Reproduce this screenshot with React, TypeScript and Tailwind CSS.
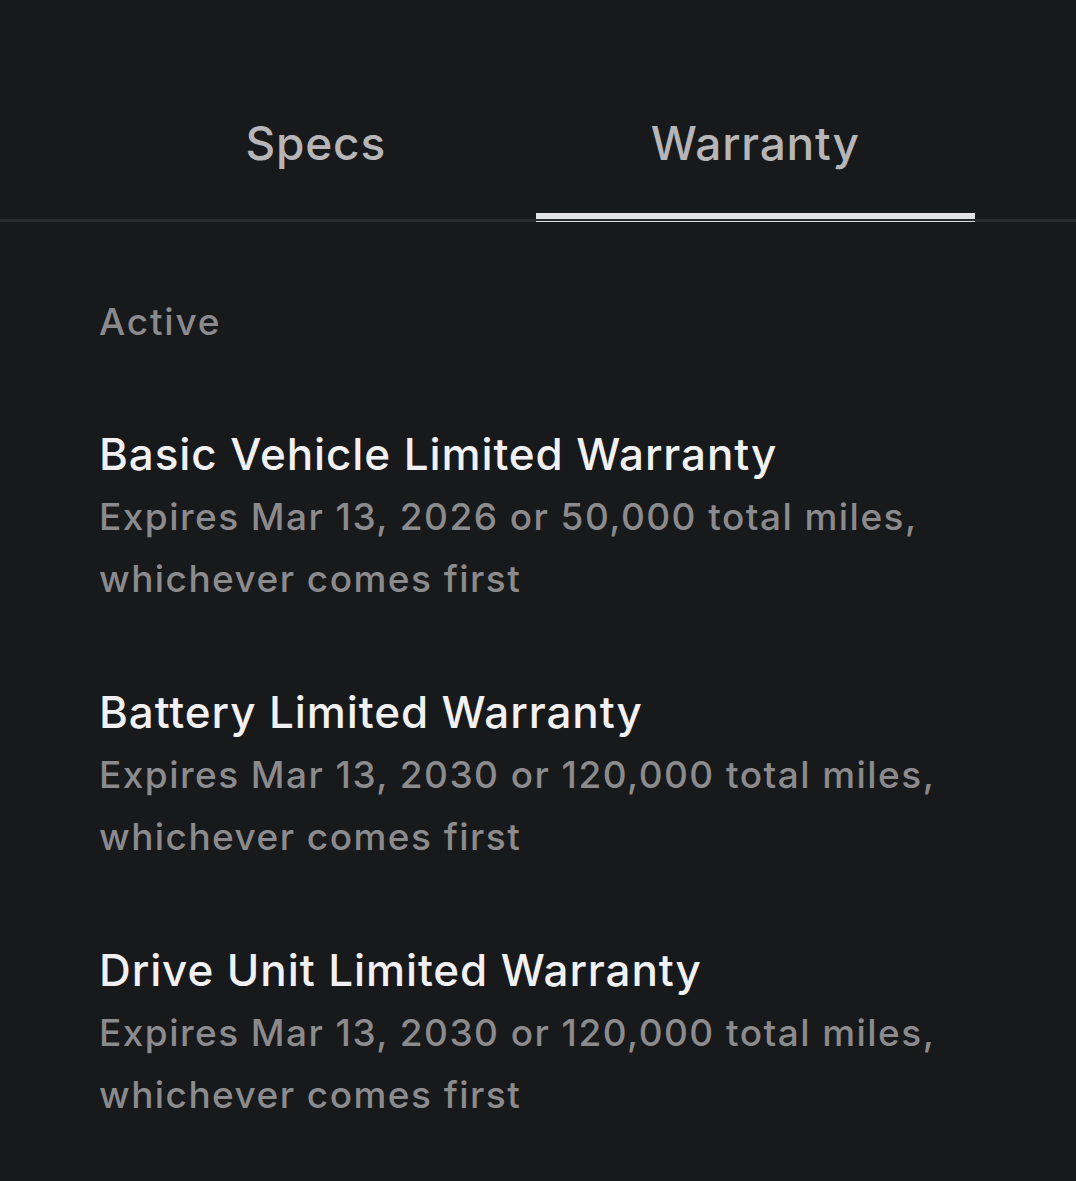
import { useState } from "react";

const WARRANTIES = [
  {
    title: "Basic Vehicle Limited Warranty",
    detail: "Expires Mar 13, 2026 or 50,000 total miles, whichever comes first",
  },
  {
    title: "Battery Limited Warranty",
    detail: "Expires Mar 13, 2030 or 120,000 total miles, whichever comes first",
  },
  {
    title: "Drive Unit Limited Warranty",
    detail: "Expires Mar 13, 2030 or 120,000 total miles, whichever comes first",
  },
];

const TABS = ["Specs", "Warranty"];

export default function App() {
  const [tab, setTab] = useState("Warranty");

  return (
    <div className="min-h-[1181px] w-full bg-[#18191b] font-['Inter','Noto_Sans',sans-serif] antialiased">
      {/* tabs */}
      <div className="border-b-[3px] border-[#2a2b2d] pl-[96px] pr-[101px]">
        <div className="flex">
          {TABS.map((t) => {
            const active = t === tab;
            return (
              <button
                key={t}
                onClick={() => setTab(t)}
                className="relative flex flex-1 flex-col items-center pt-[120px]"
              >
                <span className="text-[46px] font-medium leading-[46px] tracking-[0.8px] text-[#b6b6b8]">
                  {t}
                </span>
                <span
                  className={
                    active
                      ? "mt-[47px] h-[6px] w-full bg-[#e3e3e5]"
                      : "mt-[47px] h-[6px] w-full bg-transparent"
                  }
                />
                {active && (
                  <span className="absolute -bottom-[3px] left-0 h-px w-full bg-[#d9d9db]" />
                )}
              </button>
            );
          })}
        </div>
      </div>

      {/* content */}
      <div className="pl-[99px] pr-[96px]">
        <div className="mt-[81px] text-[37px] font-medium leading-[37px] tracking-[1.8px] text-[#8b8b8d]">
          Active
        </div>

        <div className="mt-[92px] flex flex-col gap-[80px]">
          {WARRANTIES.map((w) => (
            <div key={w.title}>
              <div className="text-[44px] font-medium leading-[44px] tracking-[0.9px] text-[#f1f1f3]">
                {w.title}
              </div>
              <div className="mt-[10px] text-[37px] font-medium leading-[62px] tracking-[1.45px] text-[#8b8b8d]">
                {w.detail}
              </div>
            </div>
          ))}
        </div>
      </div>
    </div>
  );
}
